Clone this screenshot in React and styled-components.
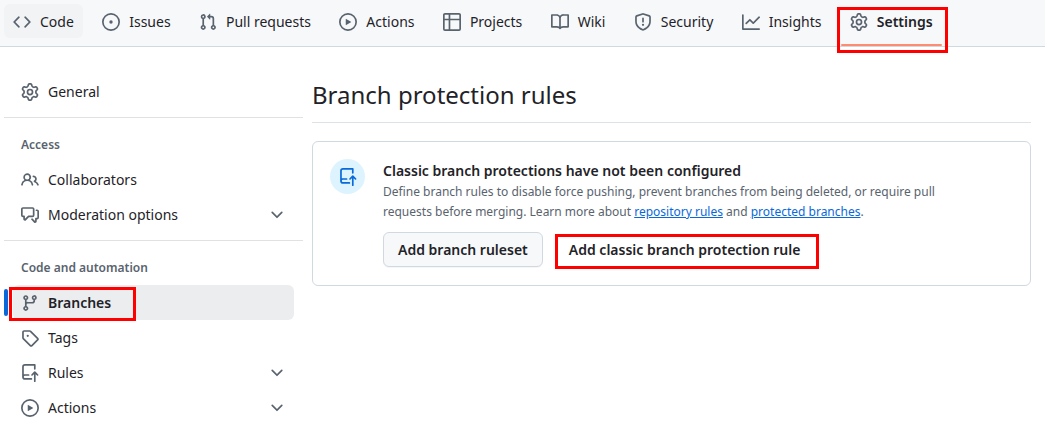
import React from "react";
import styled, { createGlobalStyle, css } from "styled-components";

const GlobalStyle = createGlobalStyle`
  *, *::before, *::after { box-sizing: border-box; }
  body {
    margin: 0;
    background: #ffffff;
    color: #1f2328;
    font-family: "Noto Sans", "Liberation Sans", sans-serif;
    font-size: 14px;
    line-height: 20px;
  }
`;

const ICONS = {
  code: "m11.28 3.22 4.25 4.25a.75.75 0 0 1 0 1.06l-4.25 4.25a.749.749 0 0 1-1.275-.326.749.749 0 0 1 .215-.734L13.94 8l-3.72-3.72a.749.749 0 0 1 .326-1.275.749.749 0 0 1 .734.215Zm-6.56 0a.751.751 0 0 1 1.042.018.751.751 0 0 1 .018 1.042L2.06 8l3.72 3.72a.749.749 0 0 1-.326 1.275.749.749 0 0 1-.734-.215L.47 8.53a.75.75 0 0 1 0-1.06Z",
  issue: "M8 9.5a1.5 1.5 0 1 0 0-3 1.5 1.5 0 0 0 0 3ZM8 0a8 8 0 1 1 0 16A8 8 0 0 1 8 0ZM1.5 8a6.5 6.5 0 1 0 13 0 6.5 6.5 0 0 0-13 0Z",
  pull: "M1.5 3.25a2.25 2.25 0 1 1 3 2.122v5.256a2.251 2.251 0 1 1-1.5 0V5.372A2.25 2.25 0 0 1 1.5 3.25Zm5.677-.177L9.573.677A.25.25 0 0 1 10 .854V2.5h1A2.5 2.5 0 0 1 13.5 5v5.628a2.251 2.251 0 1 1-1.5 0V5a1 1 0 0 0-1-1h-1v1.646a.25.25 0 0 1-.427.177L7.177 3.427a.25.25 0 0 1 0-.354ZM3.75 2.5a.75.75 0 1 0 0 1.5.75.75 0 0 0 0-1.5Zm0 9.5a.75.75 0 1 0 0 1.5.75.75 0 0 0 0-1.5Zm8.25.75a.75.75 0 1 0 1.5 0 .75.75 0 0 0-1.5 0Z",
  play: "M8 0a8 8 0 1 1 0 16A8 8 0 0 1 8 0ZM1.5 8a6.5 6.5 0 1 0 13 0 6.5 6.5 0 0 0-13 0Zm4.879-2.773 4.264 2.559a.25.25 0 0 1 0 .428l-4.264 2.559A.25.25 0 0 1 6 10.559V5.442a.25.25 0 0 1 .379-.215Z",
  table: "M0 1.75C0 .784.784 0 1.75 0h12.5C15.216 0 16 .784 16 1.75v12.5A1.75 1.75 0 0 1 14.25 16H1.75A1.75 1.75 0 0 1 0 14.25ZM6.5 6.5v8h7.75a.25.25 0 0 0 .25-.25V6.5Zm8-1.5V1.75a.25.25 0 0 0-.25-.25H6.5V5Zm-13 1.5v7.75c0 .138.112.25.25.25H5v-8ZM5 5V1.5H1.75a.25.25 0 0 0-.25.25V5Z",
  book: "M0 1.75A.75.75 0 0 1 .75 1h4.253c1.227 0 2.317.59 3 1.501A3.743 3.743 0 0 1 11.006 1h4.245a.75.75 0 0 1 .75.75v10.5a.75.75 0 0 1-.75.75h-4.507a2.25 2.25 0 0 0-1.591.659l-.622.621a.75.75 0 0 1-1.06 0l-.622-.621A2.25 2.25 0 0 0 5.258 13H.75a.75.75 0 0 1-.75-.75Zm7.251 10.324.004-5.073-.002-2.253A2.25 2.25 0 0 0 5.003 2.5H1.5v9h3.757a3.75 3.75 0 0 1 1.994.574ZM8.755 4.75l-.004 7.322a3.752 3.752 0 0 1 1.992-.572H14.5v-9h-3.495a2.25 2.25 0 0 0-2.25 2.25Z",
  shield: "M7.467.133a1.748 1.748 0 0 1 1.066 0l5.25 1.68A1.75 1.75 0 0 1 15 3.48V7c0 1.566-.32 3.182-1.303 4.682-.983 1.498-2.585 2.813-5.032 3.855a1.697 1.697 0 0 1-1.33 0c-2.447-1.042-4.049-2.357-5.032-3.855C1.32 10.182 1 8.566 1 7V3.48a1.75 1.75 0 0 1 1.217-1.667Zm.61 1.429a.25.25 0 0 0-.153 0l-5.25 1.68a.25.25 0 0 0-.174.238V7c0 1.358.275 2.666 1.057 3.86.784 1.194 2.121 2.34 4.366 3.297a.196.196 0 0 0 .154 0c2.245-.956 3.582-2.104 4.366-3.298C13.225 9.666 13.5 8.36 13.5 7V3.48a.251.251 0 0 0-.174-.237l-5.25-1.68ZM8.75 4.75v3a.75.75 0 0 1-1.5 0v-3a.75.75 0 0 1 1.5 0ZM9 10.5a1 1 0 1 1-2 0 1 1 0 0 1 2 0Z",
  graph: "M1.5 1.75V13.5h13.75a.75.75 0 0 1 0 1.5H.75a.75.75 0 0 1-.75-.75V1.75a.75.75 0 0 1 1.5 0Zm14.28 2.53-5.25 5.25a.75.75 0 0 1-1.06 0L7 7.06 4.28 9.78a.751.751 0 0 1-1.042-.018.751.751 0 0 1-.018-1.042l3.25-3.25a.75.75 0 0 1 1.06 0L10 7.94l4.72-4.72a.751.751 0 0 1 1.042.018.751.751 0 0 1 .018 1.042Z",
  gear: "M8 0a8.2 8.2 0 0 1 .701.031C9.444.095 9.99.645 10.16 1.29l.288 1.107c.018.066.079.158.212.224.231.114.454.243.668.386.123.082.233.09.299.071l1.103-.303c.644-.176 1.392.021 1.82.63.27.385.506.792.704 1.218.315.675.111 1.422-.364 1.891l-.814.806c-.049.048-.098.147-.088.294.016.257.016.515 0 .772-.01.147.038.246.088.294l.814.806c.475.469.679 1.216.364 1.891a7.977 7.977 0 0 1-.704 1.217c-.428.61-1.176.807-1.82.63l-1.102-.302c-.067-.019-.177-.011-.3.071a5.909 5.909 0 0 1-.668.386c-.133.066-.194.158-.211.224l-.29 1.106c-.168.646-.715 1.196-1.458 1.26a8.006 8.006 0 0 1-1.402 0c-.743-.064-1.289-.614-1.458-1.26l-.289-1.106c-.018-.066-.079-.158-.212-.224a5.738 5.738 0 0 1-.668-.386c-.123-.082-.233-.09-.299-.071l-1.103.303c-.644.176-1.392-.021-1.82-.63a8.12 8.12 0 0 1-.704-1.218c-.315-.675-.111-1.422.363-1.891l.815-.806c.05-.048.098-.147.088-.294a6.214 6.214 0 0 1 0-.772c.01-.147-.038-.246-.088-.294l-.815-.806C.635 6.045.431 5.298.746 4.623a7.92 7.92 0 0 1 .704-1.217c.428-.61 1.176-.807 1.82-.63l1.102.302c.067.019.177.011.3-.071.214-.143.437-.272.668-.386.133-.066.194-.158.211-.224l.29-1.106C6.009.645 6.556.095 7.299.03 7.53.01 7.764 0 8 0Zm-.571 1.525c-.036.003-.108.036-.137.146l-.289 1.105c-.147.561-.549.967-.998 1.189-.173.086-.34.183-.5.29-.417.278-.97.423-1.529.27l-1.103-.303c-.109-.03-.175.016-.195.045-.22.312-.412.644-.573.99-.014.031-.021.11.059.19l.815.806c.411.406.562.957.53 1.456a4.709 4.709 0 0 0 0 .582c.032.499-.119 1.05-.53 1.456l-.815.806c-.081.08-.073.159-.059.19.162.346.353.677.573.989.02.03.085.076.195.046l1.102-.303c.56-.153 1.113-.008 1.53.27.161.107.328.204.501.29.447.222.85.629.997 1.189l.289 1.105c.029.109.101.143.137.146a6.6 6.6 0 0 0 1.142 0c.036-.003.108-.036.137-.146l.289-1.105c.147-.561.549-.967.998-1.189.173-.086.34-.183.5-.29.417-.278.97-.423 1.529-.27l1.103.303c.109.029.175-.016.195-.045.22-.313.411-.644.573-.99.014-.031.021-.11-.059-.19l-.815-.806c-.411-.406-.562-.957-.53-1.456a4.709 4.709 0 0 0 0-.582c-.032-.499.119-1.05.53-1.456l.815-.806c.081-.08.073-.159.059-.19a6.464 6.464 0 0 0-.573-.989c-.02-.03-.085-.076-.195-.046l-1.102.303c-.56.153-1.113.008-1.53-.27a4.44 4.44 0 0 0-.501-.29c-.447-.222-.85-.629-.997-1.189l-.289-1.105c-.029-.11-.101-.143-.137-.146a6.6 6.6 0 0 0-1.142 0ZM11 8a3 3 0 1 1-6 0 3 3 0 0 1 6 0ZM9.5 8a1.5 1.5 0 1 0-3.001.001A1.5 1.5 0 0 0 9.5 8Z",
  people: "M2 5.5a3.5 3.5 0 1 1 5.898 2.549 5.508 5.508 0 0 1 3.034 4.084.75.75 0 1 1-1.482.235 4 4 0 0 0-7.9 0 .75.75 0 0 1-1.482-.236A5.507 5.507 0 0 1 3.102 8.05 3.493 3.493 0 0 1 2 5.5ZM11 4a3.001 3.001 0 0 1 2.22 5.018 5.01 5.01 0 0 1 2.56 3.012.749.749 0 0 1-.885.954.752.752 0 0 1-.549-.514 3.507 3.507 0 0 0-2.522-2.372.75.75 0 0 1-.574-.73v-.352a.75.75 0 0 1 .416-.672A1.5 1.5 0 0 0 11 5.5.75.75 0 0 1 11 4Zm-5.5-.5a2 2 0 1 0-.001 3.999A2 2 0 0 0 5.5 3.5Z",
  discussion: "M1.75 1h8.5c.966 0 1.75.784 1.75 1.75v5.5A1.75 1.75 0 0 1 10.25 10H7.061l-2.574 2.573A1.458 1.458 0 0 1 2 11.543V10h-.25A1.75 1.75 0 0 1 0 8.25v-5.5C0 1.784.784 1 1.75 1ZM1.5 2.75v5.5c0 .138.112.25.25.25h1a.75.75 0 0 1 .75.75v2.19l2.72-2.72a.749.749 0 0 1 .53-.22h3.5a.25.25 0 0 0 .25-.25v-5.5a.25.25 0 0 0-.25-.25h-8.5a.25.25 0 0 0-.25.25Zm13 2a.25.25 0 0 0-.25-.25h-.5a.75.75 0 0 1 0-1.5h.5c.966 0 1.75.784 1.75 1.75v5.5A1.75 1.75 0 0 1 14.25 12H14v1.543a1.458 1.458 0 0 1-2.487 1.03L9.22 12.28a.749.749 0 0 1 .326-1.275.749.749 0 0 1 .734.215l2.22 2.22v-2.19a.75.75 0 0 1 .75-.75h1a.25.25 0 0 0 .25-.25Z",
  branch: "M9.5 3.25a2.25 2.25 0 1 1 3 2.122V6A2.5 2.5 0 0 1 10 8.5H6a1 1 0 0 0-1 1v1.128a2.251 2.251 0 1 1-1.5 0V5.372a2.25 2.25 0 1 1 1.5 0v1.836A2.493 2.493 0 0 1 6 7h4a1 1 0 0 0 1-1v-.628A2.25 2.25 0 0 1 9.5 3.25Zm-6 0a.75.75 0 1 0 1.5 0 .75.75 0 0 0-1.5 0Zm8.25-.75a.75.75 0 1 0 0 1.5.75.75 0 0 0 0-1.5ZM4.25 12a.75.75 0 1 0 0 1.5.75.75 0 0 0 0-1.5Z",
  tag: "M1 7.775V2.75C1 1.784 1.784 1 2.75 1h5.025c.464 0 .91.184 1.238.513l6.25 6.25a1.75 1.75 0 0 1 0 2.474l-5.026 5.026a1.75 1.75 0 0 1-2.474 0l-6.25-6.25A1.752 1.752 0 0 1 1 7.775Zm1.5 0c0 .066.026.13.073.177l6.25 6.25a.25.25 0 0 0 .354 0l5.025-5.025a.25.25 0 0 0 0-.354l-6.25-6.25a.25.25 0 0 0-.177-.073H2.75a.25.25 0 0 0-.25.25ZM6 5a1 1 0 1 1 0 2 1 1 0 0 1 0-2Z",
  rules: "M1 2.5A2.5 2.5 0 0 1 3.5 0h8.75a.75.75 0 0 1 .75.75v3.5a.75.75 0 0 1-1.5 0V1.5h-8a1 1 0 0 0-1 1v6.708A2.493 2.493 0 0 1 3.5 9h3.25a.75.75 0 0 1 0 1.5H3.5a1 1 0 0 0 0 2h5.75a.75.75 0 0 1 0 1.5H3.5A2.5 2.5 0 0 1 1 11.5Zm13.23 7.79h-.001l-1.224-1.224v6.184a.75.75 0 0 1-1.5 0V9.066L10.28 10.29a.75.75 0 0 1-1.06-1.061l2.505-2.504a.75.75 0 0 1 1.06 0L15.29 9.23a.751.751 0 0 1-.018 1.042.751.751 0 0 1-1.042.018Z",
  chevron: "M12.78 5.22a.749.749 0 0 1 0 1.06l-4.25 4.25a.749.749 0 0 1-1.06 0L3.22 6.28a.749.749 0 1 1 1.06-1.06L8 8.939l3.72-3.719a.749.749 0 0 1 1.06 0Z",
};

const Glyph = styled.svg`
  flex: none;
  width: 18px;
  height: 18px;
  fill: currentColor;
  color: ${(p) => p.$color || "#59636e"};
`;

function Icon({ name, color }) {
  return (
    <Glyph viewBox="0 0 16 16" aria-hidden="true" $color={color}>
      <path fillRule="evenodd" d={ICONS[name]} />
    </Glyph>
  );
}

/* Red frame that points the reader at a control. */
const callout = css`
  position: relative;
  &::after {
    content: "";
    position: absolute;
    inset: ${(p) => p.$callout};
    border: 3px solid #ff0000;
    pointer-events: none;
  }
`;

const TopNav = styled.nav`
  display: flex;
  column-gap: 1%;
  padding: 4px 4px 0;
  background: #f6f8fa;
  border-bottom: 1px solid #d1d9e0;
`;

const Tab = styled.a`
  display: flex;
  flex-direction: column;
  gap: 6px;
  color: inherit;
  text-decoration: none;
  white-space: nowrap;
  font-weight: ${(p) => (p.$current ? 600 : 400)};
  ${(p) => p.$callout && callout}
`;

const TabLabel = styled.span`
  display: flex;
  align-items: center;
  gap: 9px;
  height: 34px;
  padding: 1px 9px 0;
  border-radius: 6px;
  background: ${(p) => (p.$hovered ? "#f1f3f5" : "transparent")};
`;

const TabLine = styled.span`
  height: 2px;
  border-radius: 1px;
  background: ${(p) => (p.$current ? "#fd8c73" : "transparent")};
`;

const Page = styled.div`
  display: grid;
  grid-template-columns: 299px minmax(0, 1fr);
  gap: 9px;
  padding: 27px 14px 0 4px;
`;

const Sidebar = styled.nav`
  display: flex;
  flex-direction: column;
`;

const Group = styled.section`
  padding-bottom: 8px;
  & + & {
    border-top: 1px solid #dfe2e5;
  }
`;

const GroupTitle = styled.h3`
  margin: 0;
  padding: 17px 17px 7px;
  color: #59636e;
  font-size: 12px;
  line-height: 20px;
  font-weight: 600;
`;

const List = styled.ul`
  margin: 0;
  padding: 0;
  list-style: none;
`;

const Row = styled.li`
  display: flex;
  align-items: center;
  gap: 5px;
  height: 35px;
  padding-right: 9px;
  &::before {
    content: "";
    width: 4px;
    height: 27px;
    border-radius: 6px;
    background: ${(p) => (p.$current ? "#0969da" : "transparent")};
  }
`;

const Entry = styled.a`
  flex: 1;
  display: flex;
  align-items: center;
  gap: 9px;
  height: 35px;
  padding: 0 8px;
  border-radius: 6px;
  color: inherit;
  text-decoration: none;
  font-weight: ${(p) => (p.$current ? 600 : 400)};
  background: ${(p) => (p.$current ? "#ecedef" : "transparent")};
  ${(p) => p.$callout && callout}
`;

const EntryText = styled.span`
  flex: 1;
`;

const Main = styled.main`
  padding-top: 3px;
`;

const Heading = styled.h2`
  margin: 0 0 18px;
  padding-bottom: 9px;
  border-bottom: 1px solid #dde2e7;
  font-size: 24px;
  line-height: 36px;
  font-weight: 400;
`;

const Card = styled.section`
  display: flex;
  gap: 18px;
  padding: 17px 17px 18px;
  border: 1px solid #d1d9e0;
  border-radius: 6px;
`;

const Badge = styled.span`
  flex: none;
  display: flex;
  align-items: center;
  justify-content: center;
  width: 35px;
  height: 35px;
  border-radius: 50%;
  background: #ddf4ff;
`;

const CardTitle = styled.h3`
  margin: 0;
  font-size: 14px;
  line-height: 23px;
  font-weight: 600;
`;

const CardText = styled.p`
  margin: 0;
  max-width: 600px;
  color: #59636e;
  font-size: 12px;
  line-height: 20px;
`;

const TextLink = styled.a`
  color: #0969da;
  text-decoration: underline;
`;

const Actions = styled.div`
  display: flex;
  gap: 11px;
  padding-top: 10px;
`;

const Button = styled.button`
  height: 35px;
  padding: 1px 14px 0;
  border: 1px solid ${(p) => (p.$plain ? "transparent" : "#d1d9e0")};
  border-radius: 6px;
  background: ${(p) => (p.$plain ? "transparent" : "#f6f8fa")};
  box-shadow: ${(p) => (p.$plain ? "none" : "0 1px 0 rgba(31, 35, 40, 0.04)")};
  color: inherit;
  font: inherit;
  font-weight: 600;
  white-space: nowrap;
  cursor: pointer;
  ${(p) => p.$callout && callout}
`;

const TABS = [
  { label: "Code", icon: "code", hovered: true },
  { label: "Issues", icon: "issue" },
  { label: "Pull requests", icon: "pull" },
  { label: "Actions", icon: "play" },
  { label: "Projects", icon: "table" },
  { label: "Wiki", icon: "book" },
  { label: "Security", icon: "shield" },
  { label: "Insights", icon: "graph" },
  { label: "Settings", icon: "gear", current: true, callout: "3px -6px -7px -4px" },
];

const GROUPS = [
  { items: [{ label: "General", icon: "gear" }] },
  {
    title: "Access",
    items: [
      { label: "Collaborators", icon: "people" },
      { label: "Moderation options", icon: "discussion", expands: true },
    ],
  },
  {
    title: "Code and automation",
    items: [
      { label: "Branches", icon: "branch", current: true, callout: "2px 158px -1px -4px" },
      { label: "Tags", icon: "tag" },
      { label: "Rules", icon: "rules", expands: true },
      { label: "Actions", icon: "play", expands: true },
    ],
  },
];

export default function App() {
  return (
    <>
      <GlobalStyle />
      <TopNav aria-label="Repository">
        {TABS.map((t) => (
          <Tab
            key={t.label}
            href="#"
            $current={t.current}
            $callout={t.callout}
            aria-current={t.current ? "page" : undefined}
          >
            <TabLabel $hovered={t.hovered}>
              <Icon name={t.icon} />
              {t.label}
            </TabLabel>
            <TabLine $current={t.current} />
          </Tab>
        ))}
      </TopNav>
      <Page>
        <Sidebar aria-label="Settings">
          {GROUPS.map((g, i) => (
            <Group key={i}>
              {g.title && <GroupTitle>{g.title}</GroupTitle>}
              <List>
                {g.items.map((item) => (
                  <Row key={item.label} $current={item.current}>
                    <Entry href="#" $current={item.current} $callout={item.callout}>
                      <Icon name={item.icon} />
                      <EntryText>{item.label}</EntryText>
                      {item.expands && <Icon name="chevron" />}
                    </Entry>
                  </Row>
                ))}
              </List>
            </Group>
          ))}
        </Sidebar>
        <Main>
          <Heading>Branch protection rules</Heading>
          <Card>
            <Badge>
              <Icon name="rules" color="#0969da" />
            </Badge>
            <div>
              <CardTitle>Classic branch protections have not been configured</CardTitle>
              <CardText>
                Define branch rules to disable force pushing, prevent branches from being
                deleted, or require pull requests before merging. Learn more about{" "}
                <TextLink href="#">repository rules</TextLink> and{" "}
                <TextLink href="#">protected branches</TextLink>.
              </CardText>
              <Actions>
                <Button type="button">Add branch ruleset</Button>
                <Button type="button" $plain $callout="1px -5px -3px 0">
                  Add classic branch protection rule
                </Button>
              </Actions>
            </div>
          </Card>
        </Main>
      </Page>
    </>
  );
}
